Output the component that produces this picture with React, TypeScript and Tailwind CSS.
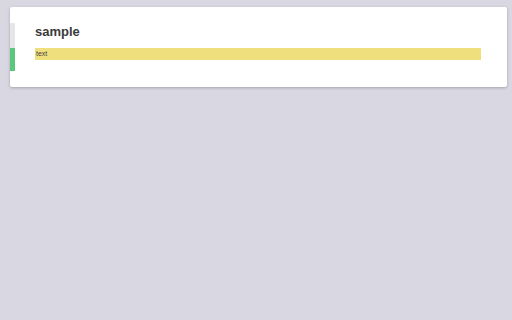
export default function App() {
  return (
    <div
      className="min-h-[320px] w-full bg-[#d9d7e1] pl-[10px] pr-[5px] pt-[7px]"
      style={{ fontFamily: '"Liberation Sans", Arial, sans-serif' }}
    >
      {/* Card */}
      <div className="flex h-[80px] rounded-[2px] bg-white shadow-[0_1px_3px_rgba(0,0,0,0.25)]">
        {/* Left status strip */}
        <div className="mt-[16px] flex w-[5px] flex-col">
          <div className="h-[25px] bg-[#e6e6e8]" />
          <div className="h-[23px] bg-[#5cc67d]" />
        </div>

        {/* Content */}
        <div className="flex flex-1 flex-col pl-[20px] pr-[26px] pt-[17px]">
          <h1 className="text-[13px] font-bold leading-[16px] text-[#3a3a3a]">sample</h1>
          <div className="mt-[8px] h-[12px] bg-[#efdf7d] pl-[1px] text-[7px] leading-[12px] text-[#444444]">
            text
          </div>
        </div>
      </div>
    </div>
  );
}
